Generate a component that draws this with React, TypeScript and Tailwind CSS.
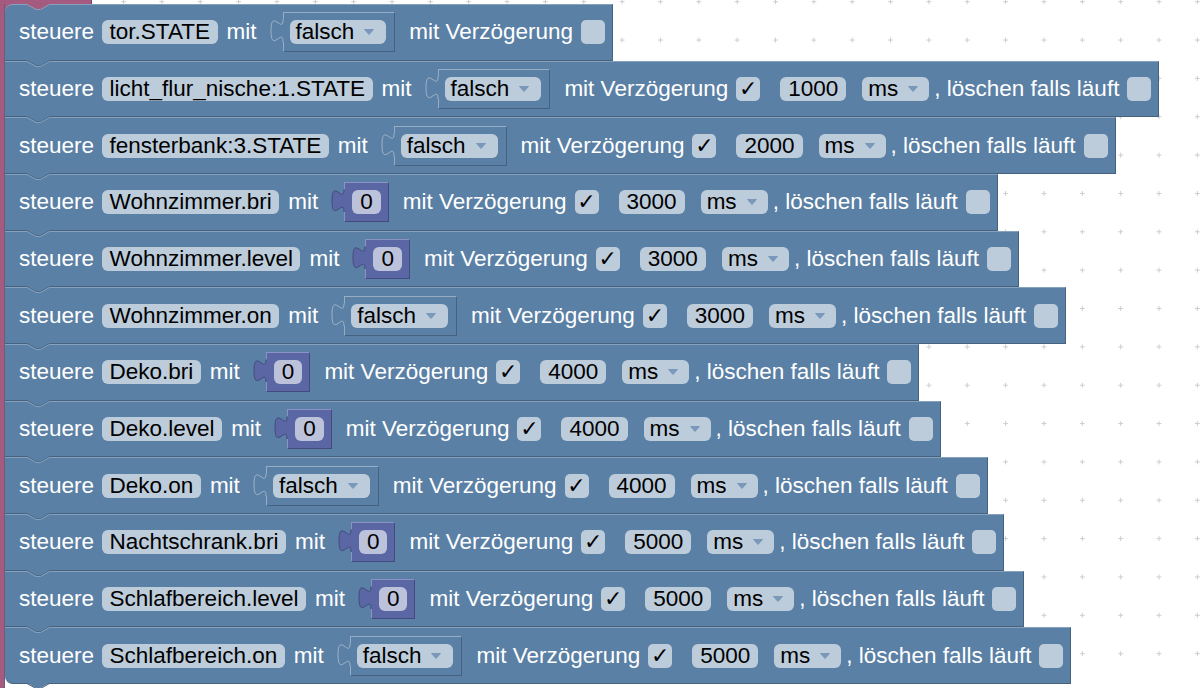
import clsx from "clsx";

type Row = {
  name: string;
  value: "falsch" | "0";
  delay?: string;
};

const rows: Row[] = [
  { name: "tor.STATE", value: "falsch" },
  { name: "licht_flur_nische:1.STATE", value: "falsch", delay: "1000" },
  { name: "fensterbank:3.STATE", value: "falsch", delay: "2000" },
  { name: "Wohnzimmer.bri", value: "0", delay: "3000" },
  { name: "Wohnzimmer.level", value: "0", delay: "3000" },
  { name: "Wohnzimmer.on", value: "falsch", delay: "3000" },
  { name: "Deko.bri", value: "0", delay: "4000" },
  { name: "Deko.level", value: "0", delay: "4000" },
  { name: "Deko.on", value: "falsch", delay: "4000" },
  { name: "Nachtschrank.bri", value: "0", delay: "5000" },
  { name: "Schlafbereich.level", value: "0", delay: "5000" },
  { name: "Schlafbereich.on", value: "falsch", delay: "5000" },
];

function Arrow({ right = "mr-[12px]" }: { right?: string }) {
  return (
    <svg width="10" height="6" viewBox="0 0 10 6" className={clsx("ml-[10px]", right)}>
      <path d="M0.5,0.5 H9.5 L5,5.5 Z" fill="#7a98ba" stroke="#7a98ba" strokeLinejoin="round" />
    </svg>
  );
}

function Checkbox({ checked }: { checked?: boolean }) {
  return (
    <span className="flex h-6 w-6 items-center justify-center rounded-[5px] bg-[#bdccdb] font-['DejaVu_Sans',sans-serif] text-[22px] font-bold leading-none text-black">
      {checked ? "✓" : ""}
    </span>
  );
}

// puzzle tab of a value block, sits on the left edge of its box
function Tab({ fill, stroke }: { fill: string; stroke: string }) {
  return (
    <svg className="absolute left-[-14px] top-[-1px]" width="14" height="40" viewBox="0 0 14 40">
      <path d="M14,7.5 H13 C13,22.5 1,-4.5 1,18.75 S13,15 13,30 H14 Z" fill={fill} />
      <path d="M13,7.5 C13,22.5 1,-4.5 1,18.75 S13,15 13,30" fill="none" stroke={stroke} strokeWidth="1" />
    </svg>
  );
}

function Value({ value }: { value: Row["value"] }) {
  if (value === "0") {
    return (
      <div className="relative ml-[26px] flex h-10 items-center border border-t-[#8a93c4] border-l-[#8a93c4] border-b-[#434b7d] border-r-[#434b7d] bg-[#5b67a5] pl-[7px] pr-[7px]">
        <Tab fill="#5b67a5" stroke="#434b7d" />
        <span className="flex h-6 items-center rounded-[6px] bg-[#bdc2db] px-[8px] text-black">0</span>
      </div>
    );
  }
  return (
    <div className="relative ml-[26px] flex h-10 items-center border border-t-[#97adc5] border-l-[#97adc5] border-b-[#46627f] border-r-[#46627f] bg-[#5b80a5] pl-[6px] pr-[8px]">
      <Tab fill="#5b80a5" stroke="#9fb3c8" />
      <span className="flex h-6 items-center rounded-[6px] bg-[#bdccdb] pl-[6px] text-black">
        falsch
        <Arrow />
      </span>
    </div>
  );
}

function Block({ row, first, last }: { row: Row; first: boolean; last: boolean }) {
  return (
    <div
      className={clsx(
        "relative flex h-[56.67px] w-fit items-center border-t border-b border-r border-t-[#86a1bd] border-b-[#46627f] border-r-[#46627f] bg-[#5b80a5] pl-[14px] pr-[7px] whitespace-pre",
        first && "rounded-tl-[8px]",
        last && "rounded-bl-[8px]"
      )}
    >
      {/* notch on top */}
      {first ? (
        <svg className="absolute left-[22px] top-[-1px]" width="24" height="8" viewBox="0 0 24 8">
          <path d="M0,0 H22.5 V1 L13.5,6 H9 L0,1 Z" fill="#a55b80" />
          <path d="M0,0.5 L9,5.5 H13.5 L22.5,0.5" fill="none" stroke="#8aa3bd" strokeWidth="1" />
        </svg>
      ) : (
        <svg className="absolute left-[22px] top-[-2px]" width="24" height="8" viewBox="0 0 24 8">
          <rect x="0" y="0" width="22.5" height="2" fill="#5b80a5" />
          <path d="M0,0.5 L9,5.5 H13.5 L22.5,0.5" fill="none" stroke="#4d6a88" strokeWidth="1" />
          <path d="M0,1.5 L9,6.5 H13.5 L22.5,1.5" fill="none" stroke="#86a1bd" strokeWidth="1" />
        </svg>
      )}

      <span>steuere</span>
      <span className="ml-[8px] flex h-6 items-center rounded-[6px] bg-[#bdccdb] px-[7.5px] text-black">{row.name}</span>
      <span className="ml-[9px]">mit</span>
      <Value value={row.value} />
      <span className="ml-[14px]">mit Verzögerung</span>
      <span className="ml-[8px]">
        <Checkbox checked={!!row.delay} />
      </span>
      {row.delay && (
        <>
          <span className="ml-[20px] flex h-6 items-center rounded-[6px] bg-[#bdccdb] px-[8px] text-black">{row.delay}</span>
          <span className="ml-[16px] flex h-6 items-center rounded-[6px] bg-[#bdccdb] pl-[6px] text-black">
            ms
            <Arrow right="mr-[11px]" />
          </span>
          <span className="ml-[5px]">, löschen falls läuft</span>
          <span className="ml-[8px]">
            <Checkbox />
          </span>
        </>
      )}

      {/* tab below the last block */}
      {last && (
        <svg className="absolute left-[22px] top-full" width="24" height="7" viewBox="0 0 24 7">
          <path d="M0,0 H22.5 L13.5,5 H9 Z" fill="#5b80a5" />
          <path d="M0,0.5 L9,5.5 H13.5 L22.5,0.5" fill="none" stroke="#46627f" strokeWidth="1" />
        </svg>
      )}
    </div>
  );
}

export default function App() {
  return (
    <div className="relative h-[688px] w-[1200px] overflow-hidden bg-white font-['Liberation_Sans',Arial,sans-serif] text-[22.5px] text-white">
      <svg className="absolute inset-0" width="1200" height="688">
        <defs>
          <pattern id="grid" width="38.35" height="38.35" patternUnits="userSpaceOnUse" x="-10.675" y="-17.475">
            <path d="M16.675,19.175 H21.675 M19.175,16.675 V21.675" stroke="#cdcdcd" strokeWidth="1" />
          </pattern>
        </defs>
        <rect width="1200" height="688" fill="url(#grid)" />
      </svg>

      <div className="relative flex h-full flex-col">
        <div className="h-[4px] w-[92px] shrink-0 border-r border-[#7c4460] bg-[#a55b80]" />
        <div className="flex flex-1">
          <div className="w-[5px] shrink-0 border-r border-[#6e5d78] bg-[#a55b80]" />
          <div className="flex flex-col items-start">
            {rows.map((row, i) =>
              i === 0 ? (
                <div key={row.name} className="bg-[#a55b80]">
                  <Block row={row} first last={false} />
                </div>
              ) : (
                <Block key={row.name} row={row} first={false} last={i === rows.length - 1} />
              )
            )}
          </div>
        </div>
      </div>
    </div>
  );
}
